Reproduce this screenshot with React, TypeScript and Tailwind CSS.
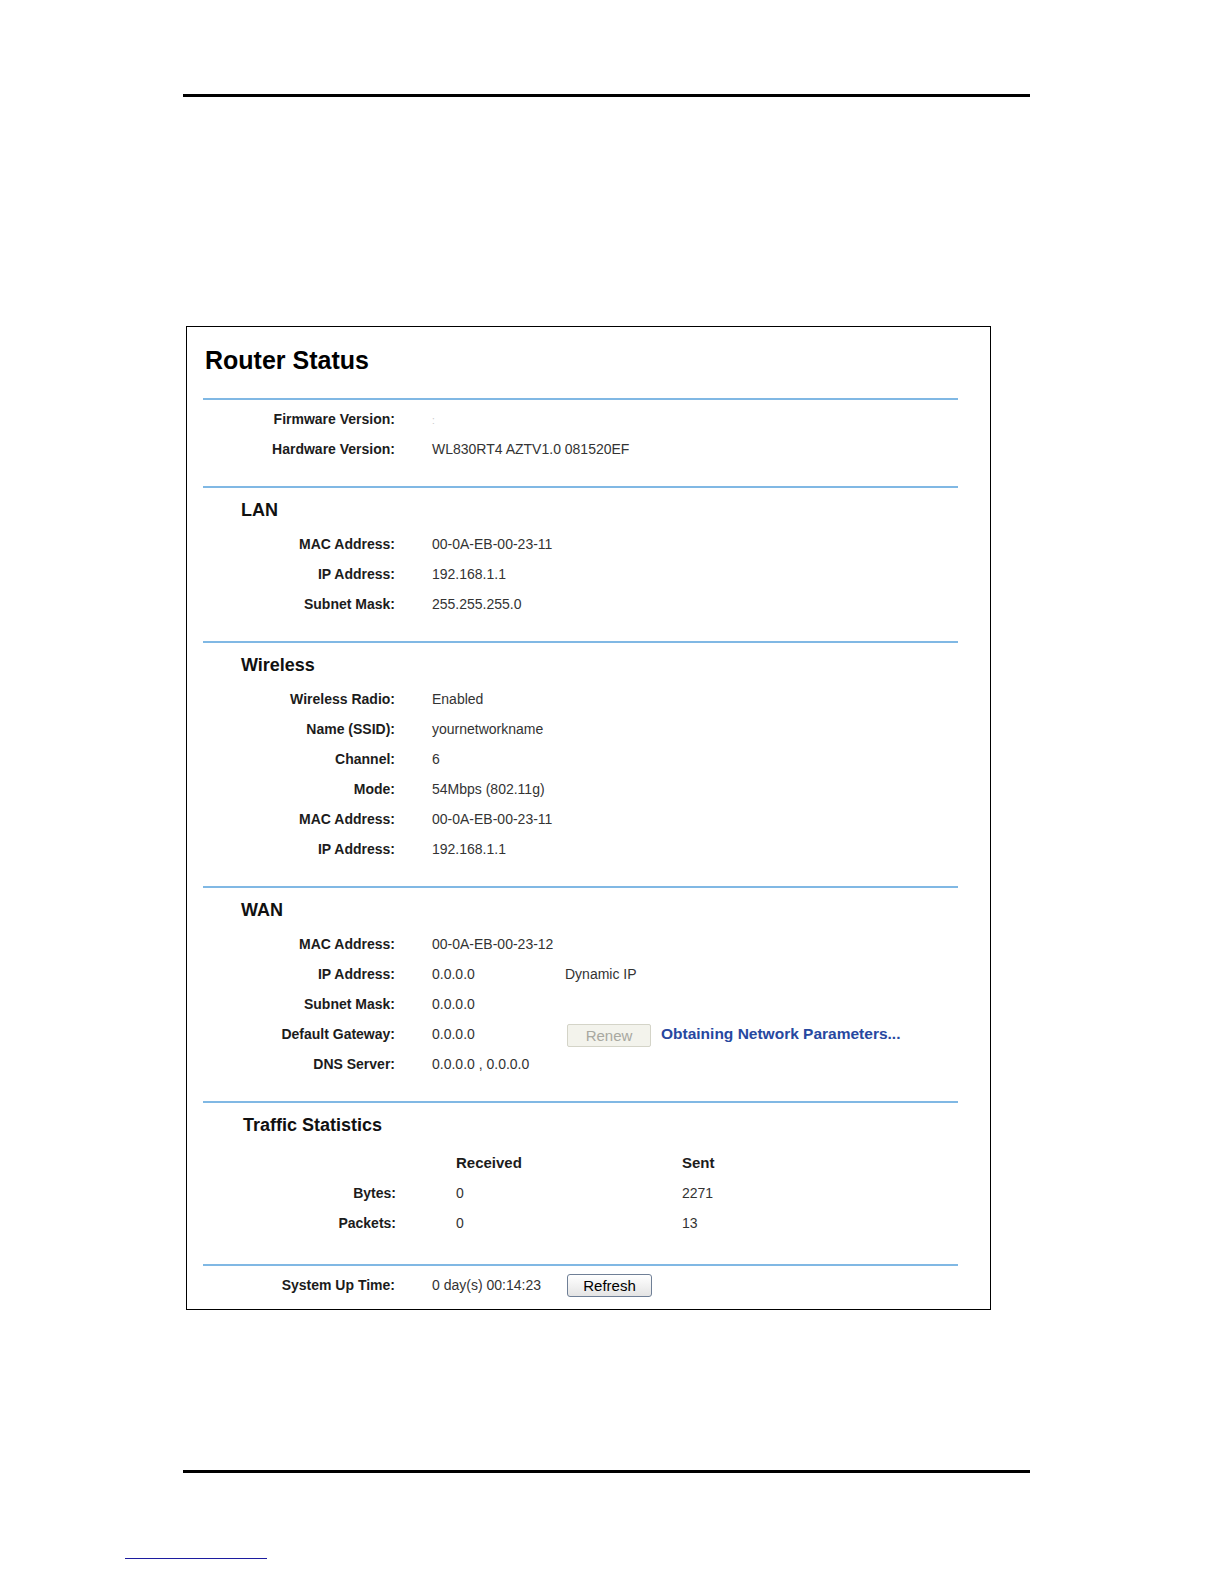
import React from "react";

type Row = { label: string; value: React.ReactNode; extra?: React.ReactNode };

const FONT = { fontFamily: '"Liberation Sans", Arial, sans-serif' };

function Divider() {
  return <div className="ml-[16px] h-[2px] w-[755px] bg-[#80b8e4]" />;
}

function InfoRow({ label, value, extra }: Row) {
  return (
    <div className="flex h-[30px] items-center text-[14px]">
      <div className="w-[208px] text-right font-bold text-[#1c1c1c]">{label}</div>
      <div className="ml-[37px] w-[133px] whitespace-nowrap text-[#333]">{value}</div>
      {extra}
    </div>
  );
}

function Section({ title, rows, last }: { title?: string; rows: Row[]; last?: boolean }) {
  return (
    <div className={last ? "" : "pb-[22px]"}>
      {title ? (
        <div className="ml-[54px] mt-[11px] h-[22px] text-[18px] font-bold leading-[22px] text-[#111]">
          {title}
        </div>
      ) : null}
      <div className={title ? "mt-[8px]" : "mt-[4px]"}>
        {rows.map((r, i) => (
          <InfoRow key={i} {...r} />
        ))}
      </div>
    </div>
  );
}

export default function App() {
  const wan: Row[] = [
    { label: "MAC Address:", value: "00-0A-EB-00-23-12" },
    { label: "IP Address:", value: "0.0.0.0", extra: <span className="text-[#333]">Dynamic IP</span> },
    { label: "Subnet Mask:", value: "0.0.0.0" },
    {
      label: "Default Gateway:",
      value: "0.0.0.0",
      extra: (
        <div className="flex items-center">
          <button className="ml-[2px] mt-[2px] h-[23px] w-[84px] rounded-[2px] border border-[#d4d4c8] bg-[#f3f3ec] text-[15px] text-[#a8a8a0]">
            Renew
          </button>
          <span className="ml-[10px] text-[15.5px] font-bold text-[#2748a0]">Obtaining Network Parameters...</span>
        </div>
      ),
    },
    { label: "DNS Server:", value: "0.0.0.0 , 0.0.0.0" },
  ];

  return (
    <div className="h-[1584px] w-[1224px] overflow-hidden bg-white pt-[94px]" style={FONT}>
      <div className="ml-[183px] h-[3px] w-[847px] bg-black" />

      <div className="ml-[186px] mt-[229px] h-[984px] w-[805px] border border-black pt-[18px]">
        <div className="ml-[18px] h-[30px] text-[25px] font-bold leading-[30px] text-black">Router Status</div>
        <div className="mt-[23px]" />
        <Divider />
        <Section
          rows={[
            { label: "Firmware Version:", value: <span className="text-[10px] text-[#c8c8c8]">:</span> },
            { label: "Hardware Version:", value: "WL830RT4 AZTV1.0 081520EF" },
          ]}
        />
        <Divider />
        <Section
          title="LAN"
          rows={[
            { label: "MAC Address:", value: "00-0A-EB-00-23-11" },
            { label: "IP Address:", value: "192.168.1.1" },
            { label: "Subnet Mask:", value: "255.255.255.0" },
          ]}
        />
        <Divider />
        <Section
          title="Wireless"
          rows={[
            { label: "Wireless Radio:", value: "Enabled" },
            { label: "Name (SSID):", value: "yournetworkname" },
            { label: "Channel:", value: "6" },
            { label: "Mode:", value: "54Mbps (802.11g)" },
            { label: "MAC Address:", value: "00-0A-EB-00-23-11" },
            { label: "IP Address:", value: "192.168.1.1" },
          ]}
        />
        <Divider />
        <Section title="WAN" rows={wan} />
        <Divider />

        <div className="pb-[26px]">
          <div className="ml-[56px] mt-[11px] h-[22px] text-[18px] font-bold leading-[22px] text-[#111]">
            Traffic Statistics
          </div>
          <div className="mt-[12px] flex h-[30px] items-center text-[15px] font-bold text-[#1c1c1c]">
            <div className="w-[209px]" />
            <div className="ml-[60px] w-[226px]">Received</div>
            <div>Sent</div>
          </div>
          {[
            ["Bytes:", "0", "2271"],
            ["Packets:", "0", "13"],
          ].map(([l, r, s]) => (
            <div key={l} className="flex h-[30px] items-center text-[14px]">
              <div className="w-[209px] text-right font-bold text-[#1c1c1c]">{l}</div>
              <div className="ml-[60px] w-[226px] text-[#333]">{r}</div>
              <div className="text-[#333]">{s}</div>
            </div>
          ))}
        </div>

        <Divider />
        <div className="mt-[4px] flex h-[30px] items-center text-[14px]">
          <div className="w-[208px] text-right font-bold text-[#1c1c1c]">System Up Time:</div>
          <div className="ml-[37px] w-[135px] whitespace-nowrap text-[#333]">0 day(s) 00:14:23</div>
          <button className="h-[23px] w-[85px] rounded-[3px] border border-[#6f7f96] bg-gradient-to-b from-white to-[#e4e4e4] text-[15px] text-black">
            Refresh
          </button>
        </div>
      </div>

      <div className="ml-[183px] mt-[160px] h-[3px] w-[847px] bg-black" />
      <div className="ml-[125px] mt-[85px] h-px w-[142px] bg-[#1c1ca0]" />
    </div>
  );
}
